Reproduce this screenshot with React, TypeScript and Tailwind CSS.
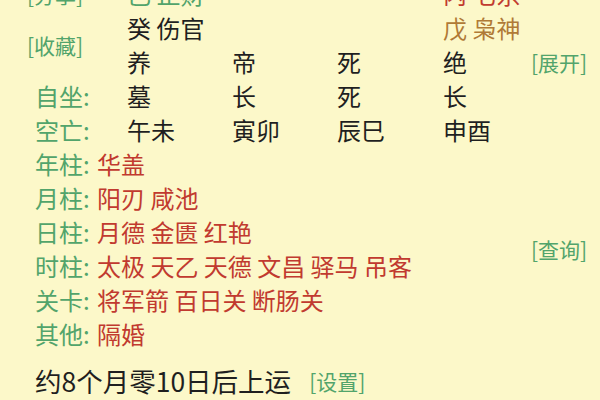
import React from "react";

const font = { fontFamily: '"Noto Sans CJK SC", "Noto Sans", sans-serif' };

const G = "text-[#52a46b]";
const R = "text-[#c13a2f]";
const B = "text-[#b07a36]";
const K = "text-[#1f1f1f]";

function Cell({ children, className = "" }: { children: React.ReactNode; className?: string }) {
  return <div className={`flex items-center whitespace-nowrap ${className}`}>{children}</div>;
}

function PillarRow({ label, values }: { label: string; values: string[] }) {
  return (
    <div className="col-span-5 flex items-center whitespace-nowrap pl-[35px]">
      <span className={`${G} w-[62px]`}>{label}</span>
      <span className={R}>{values.join(" ")}</span>
    </div>
  );
}

export default function App() {
  return (
    <div
      className="w-[600px] h-[400px] overflow-hidden bg-[#fcf8c9] text-[24px] leading-none"
      style={font}
    >
      <div className="mt-[-23px] grid grid-cols-[127px_105px_105px_106px_88px_1fr] auto-rows-[34px]">
        {/* row 0 */}
        <Cell className={`${G} pl-[27px] text-[21px]`}>[分享]</Cell>
        <Cell className={`${G} col-span-3`}>己 正财</Cell>
        <Cell className={R}>丙 七杀</Cell>
        <div />
        {/* row 1 */}
        <Cell className={`${G} row-span-2 pl-[27px] text-[21px]`}>[收藏]</Cell>
        <Cell className={`${K} col-span-3`}>癸 伤官</Cell>
        <Cell className={B}>戊 枭神</Cell>
        <div />
        {/* row 2 */}
        <Cell className={K}>养</Cell>
        <Cell className={K}>帝</Cell>
        <Cell className={K}>死</Cell>
        <Cell className={K}>绝</Cell>
        <Cell className={`${G} text-[21px]`}>[展开]</Cell>
        {/* row 3 */}
        <Cell className={`${G} pl-[35px]`}>自坐:</Cell>
        <Cell className={K}>墓</Cell>
        <Cell className={K}>长</Cell>
        <Cell className={K}>死</Cell>
        <Cell className={K}>长</Cell>
        <div />
        {/* row 4 */}
        <Cell className={`${G} pl-[35px]`}>空亡:</Cell>
        <Cell className={K}>午未</Cell>
        <Cell className={K}>寅卯</Cell>
        <Cell className={K}>辰巳</Cell>
        <Cell className={K}>申酉</Cell>
        <div />
        {/* pillars */}
        <PillarRow label="年柱:" values={["华盖"]} />
        <div />
        <PillarRow label="月柱:" values={["阳刃", "咸池"]} />
        <div />
        <PillarRow label="日柱:" values={["月德", "金匮", "红艳"]} />
        <Cell className={`${G} row-span-2 text-[21px]`}>[查询]</Cell>
        <PillarRow label="时柱:" values={["太极", "天乙", "天德", "文昌", "驿马", "吊客"]} />
        <PillarRow label="关卡:" values={["将军箭", "百日关", "断肠关"]} />
        <div />
        <PillarRow label="其他:" values={["隔婚"]} />
        <div />
      </div>
      <div className="mt-[13px] flex items-center whitespace-nowrap pl-[35px] h-[34px]">
        <span className={`${K} text-[26.5px]`}>约8个月零10日后上运</span>
        <span className={`${G} text-[21px] ml-[18px]`}>[设置]</span>
      </div>
    </div>
  );
}
